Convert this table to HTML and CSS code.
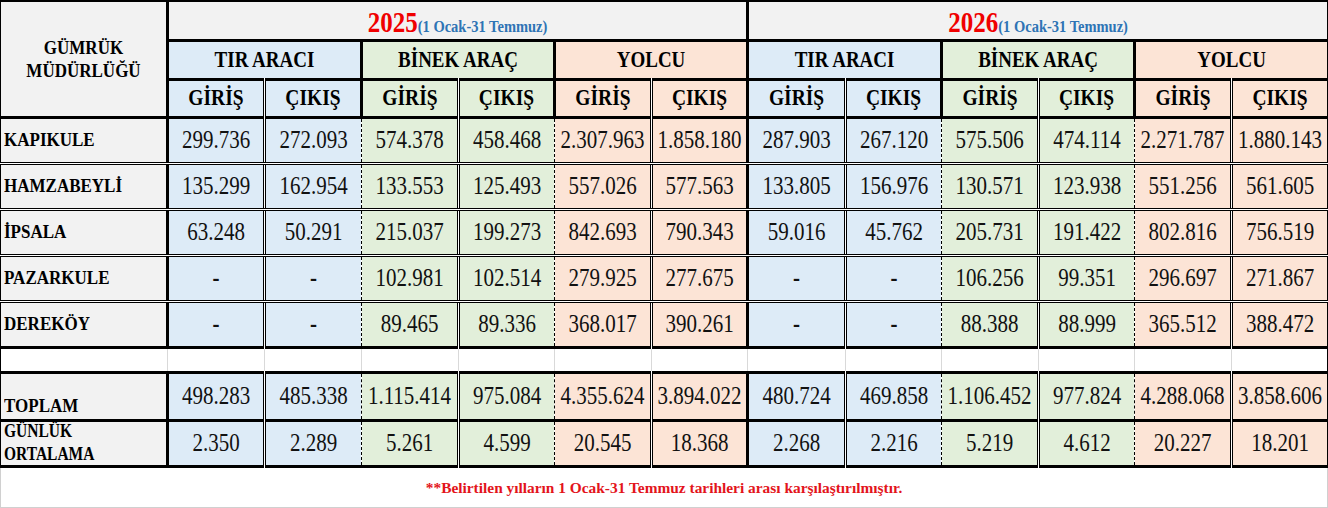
FILE: index.html
```html
<!DOCTYPE html>
<html lang="tr">
<head>
<meta charset="utf-8">
<title>Gümrük Müdürlüğü Karşılaştırma</title>
<link rel="stylesheet" href="styles.css">
</head>
<body>
<div class="sheet">
<table class="grid">
<colgroup>
<col class="w-lab">
<col class="w97"><col class="w97"><col class="w97"><col class="w96"><col class="w97"><col class="w96">
<col class="w98"><col class="w96"><col class="w97"><col class="w96"><col class="w97"><col class="w96">
</colgroup>
<thead>
<tr class="h-year">
<th class="corner" rowspan="3"><span>GÜMRÜK<br>MÜDÜRLÜĞÜ</span></th>
<th class="year s" colspan="6"><span><b class="yr">2025</b><b class="per">(1 Ocak-31 Temmuz)</b></span></th>
<th class="year s" colspan="6"><span><b class="yr">2026</b><b class="per">(1 Ocak-31 Temmuz)</b></span></th>
</tr>
<tr class="h-grp">
<th class="grp t s" colspan="2"><span>TIR ARACI</span></th>
<th class="grp b s" colspan="2"><span>BİNEK ARAÇ</span></th>
<th class="grp y s" colspan="2"><span>YOLCU</span></th>
<th class="grp t s" colspan="2"><span>TIR ARACI</span></th>
<th class="grp b s" colspan="2"><span>BİNEK ARAÇ</span></th>
<th class="grp y s" colspan="2"><span>YOLCU</span></th>
</tr>
<tr class="h-sub">
<th class="sub t s"><span>GİRİŞ</span></th><th class="sub t d"><span>ÇIKIŞ</span></th>
<th class="sub b s"><span>GİRİŞ</span></th><th class="sub b d"><span>ÇIKIŞ</span></th>
<th class="sub y s"><span>GİRİŞ</span></th><th class="sub y d"><span>ÇIKIŞ</span></th>
<th class="sub t s"><span>GİRİŞ</span></th><th class="sub t d"><span>ÇIKIŞ</span></th>
<th class="sub b s"><span>GİRİŞ</span></th><th class="sub b d"><span>ÇIKIŞ</span></th>
<th class="sub y s"><span>GİRİŞ</span></th><th class="sub y d"><span>ÇIKIŞ</span></th>
</tr>
</thead>
<tbody>
<tr class="r-data">
<th class="lab"><span>KAPIKULE</span></th>
<td class="t s"><span>299.736</span></td><td class="t d"><span>272.093</span></td><td class="b h"><span>574.378</span></td><td class="b d"><span>458.468</span></td><td class="y h"><span>2.307.963</span></td><td class="y d"><span>1.858.180</span></td>
<td class="t s"><span>287.903</span></td><td class="t d"><span>267.120</span></td><td class="b h"><span>575.506</span></td><td class="b d"><span>474.114</span></td><td class="y h"><span>2.271.787</span></td><td class="y d"><span>1.880.143</span></td>
</tr>
<tr class="r-data">
<th class="lab"><span>HAMZABEYLİ</span></th>
<td class="t s"><span>135.299</span></td><td class="t d"><span>162.954</span></td><td class="b h"><span>133.553</span></td><td class="b d"><span>125.493</span></td><td class="y h"><span>557.026</span></td><td class="y d"><span>577.563</span></td>
<td class="t s"><span>133.805</span></td><td class="t d"><span>156.976</span></td><td class="b h"><span>130.571</span></td><td class="b d"><span>123.938</span></td><td class="y h"><span>551.256</span></td><td class="y d"><span>561.605</span></td>
</tr>
<tr class="r-data">
<th class="lab"><span>İPSALA</span></th>
<td class="t s"><span>63.248</span></td><td class="t d"><span>50.291</span></td><td class="b h"><span>215.037</span></td><td class="b d"><span>199.273</span></td><td class="y h"><span>842.693</span></td><td class="y d"><span>790.343</span></td>
<td class="t s"><span>59.016</span></td><td class="t d"><span>45.762</span></td><td class="b h"><span>205.731</span></td><td class="b d"><span>191.422</span></td><td class="y h"><span>802.816</span></td><td class="y d"><span>756.519</span></td>
</tr>
<tr class="r-data">
<th class="lab"><span>PAZARKULE</span></th>
<td class="t s dash"><span>-</span></td><td class="t d dash"><span>-</span></td><td class="b h"><span>102.981</span></td><td class="b d"><span>102.514</span></td><td class="y h"><span>279.925</span></td><td class="y d"><span>277.675</span></td>
<td class="t s dash"><span>-</span></td><td class="t d dash"><span>-</span></td><td class="b h"><span>106.256</span></td><td class="b d"><span>99.351</span></td><td class="y h"><span>296.697</span></td><td class="y d"><span>271.867</span></td>
</tr>
<tr class="r-data r-last">
<th class="lab"><span>DEREKÖY</span></th>
<td class="t s dash"><span>-</span></td><td class="t d dash"><span>-</span></td><td class="b h"><span>89.465</span></td><td class="b d"><span>89.336</span></td><td class="y h"><span>368.017</span></td><td class="y d"><span>390.261</span></td>
<td class="t s dash"><span>-</span></td><td class="t d dash"><span>-</span></td><td class="b h"><span>88.388</span></td><td class="b d"><span>88.999</span></td><td class="y h"><span>365.512</span></td><td class="y d"><span>388.472</span></td>
</tr>
<tr class="r-blank">
<td></td><td></td><td></td><td></td><td></td><td></td><td></td><td></td><td></td><td></td><td></td><td></td><td></td>
</tr>
<tr class="r-total">
<th class="lab lab-bottom"><span>TOPLAM</span></th>
<td class="t s"><span>498.283</span></td><td class="t d"><span>485.338</span></td><td class="b h"><span>1.115.414</span></td><td class="b d"><span>975.084</span></td><td class="y h"><span>4.355.624</span></td><td class="y d"><span>3.894.022</span></td>
<td class="t s"><span>480.724</span></td><td class="t d"><span>469.858</span></td><td class="b h"><span>1.106.452</span></td><td class="b d"><span>977.824</span></td><td class="y h"><span>4.288.068</span></td><td class="y d"><span>3.858.606</span></td>
</tr>
<tr class="r-avg">
<th class="lab lab-two"><span>GÜNLÜK<br>ORTALAMA</span></th>
<td class="t s"><span>2.350</span></td><td class="t d"><span>2.289</span></td><td class="b h"><span>5.261</span></td><td class="b d"><span>4.599</span></td><td class="y h"><span>20.545</span></td><td class="y d"><span>18.368</span></td>
<td class="t s"><span>2.268</span></td><td class="t d"><span>2.216</span></td><td class="b h"><span>5.219</span></td><td class="b d"><span>4.612</span></td><td class="y h"><span>20.227</span></td><td class="y d"><span>18.201</span></td>
</tr>
</tbody>
</table>
<div class="note">**Belirtilen yılların 1 Ocak-31 Temmuz tarihleri arası karşılaştırılmıştır.</div>
</div>
</body>
</html>
```
FILE: styles.css
```css
html, body {
  margin: 0;
  padding: 0;
  background: #ffffff;
}
body {
  font-family: "Liberation Serif", "Times New Roman", serif;
  color: #000;
  width: 1328px;
  height: 508px;
  overflow: hidden;
}
.sheet {
  width: 1328px;
}
.grid {
  border-collapse: collapse;
  table-layout: fixed;
  width: 1327px;
  border-top: 2px solid #000;
  border-left: 1px solid #000;
  border-right: 1px solid #000;
}
.w-lab { width: 167px; }
.w96 { width: 96px; }
.w97 { width: 97px; }
.w98 { width: 98px; }

th, td {
  padding: 0;
  overflow: hidden;
  white-space: nowrap;
}
/* the source sheet is slightly stretched vertically */
th > span, td > span {
  display: inline-block;
  transform: scaleY(1.16);
}

/* header */
.h-year { height: 39px; }
.h-grp { height: 39px; }
.h-sub { height: 38px; }

.corner {
  background: #f2f2f2;
  font-size: 17px;
  font-weight: bold;
  line-height: 20px;
  text-align: center;
  vertical-align: middle;
  border-bottom: 3px solid #000;
  padding-top: 2px;
}
.year {
  background: #f2f2f2;
  border-bottom: 3px solid #000;
  text-align: center;
  vertical-align: bottom;
  padding-bottom: 3px;
  font-weight: bold;
}
.yr {
  color: #f00000;
  font-size: 25px;
  line-height: 26px;
}
.per {
  color: #2e74b5;
  font-size: 14.5px;
}
.grp {
  font-size: 19px;
  font-weight: bold;
  text-align: center;
  border-bottom: 3px solid #000;
}
.sub {
  font-size: 19.5px;
  font-weight: bold;
  text-align: center;
  border-bottom: 3px solid #000;
}

/* fills */
.t { background: #ddebf7; }
.b { background: #e2efda; }
.y { background: #fce4d6; }

/* vertical rules */
.s { border-left: 3px solid #000; }
.d { border-left: 3px double #000; }
.h { border-left: 1px dashed #000; }

/* body rows */
.r-data { height: 46px; }
.r-data th, .r-data td { border-bottom: 3px double #000; }
.r-data.r-last th, .r-data.r-last td { border-bottom: 3px solid #000; }

td {
  font-size: 21px;
  text-align: center;
  vertical-align: middle;
  color: #111;
}
td.dash { font-weight: bold; }

.lab {
  background: #f2f2f2;
  font-size: 17px;
  font-weight: bold;
  text-align: left;
  padding-left: 3px;
  vertical-align: middle;
}
.lab-bottom {
  vertical-align: bottom;
  padding-bottom: 3px;
}
.lab-two {
  font-size: 15.5px;
  line-height: 20px;
}

.r-blank { height: 25px; }
.r-blank td {
  background: #fff;
  border-left: 1px solid #d9d9d9;
}
.r-blank td:first-child { border-left: none; }

.r-total { height: 48px; }
.r-total th, .r-total td {
  border-top: 3px solid #000;
  border-bottom: 3px solid #000;
}
.r-avg { height: 46px; }
.r-avg th, .r-avg td { border-bottom: 3px solid #000; }

/* footnote */
.note {
  width: 1326px;
  height: 39px;
  border: 1px solid #d0d0d0;
  border-top: none;
  text-align: center;
  color: #e3141b;
  font-weight: bold;
  font-size: 15.4px;
  line-height: 40px;
}
```
